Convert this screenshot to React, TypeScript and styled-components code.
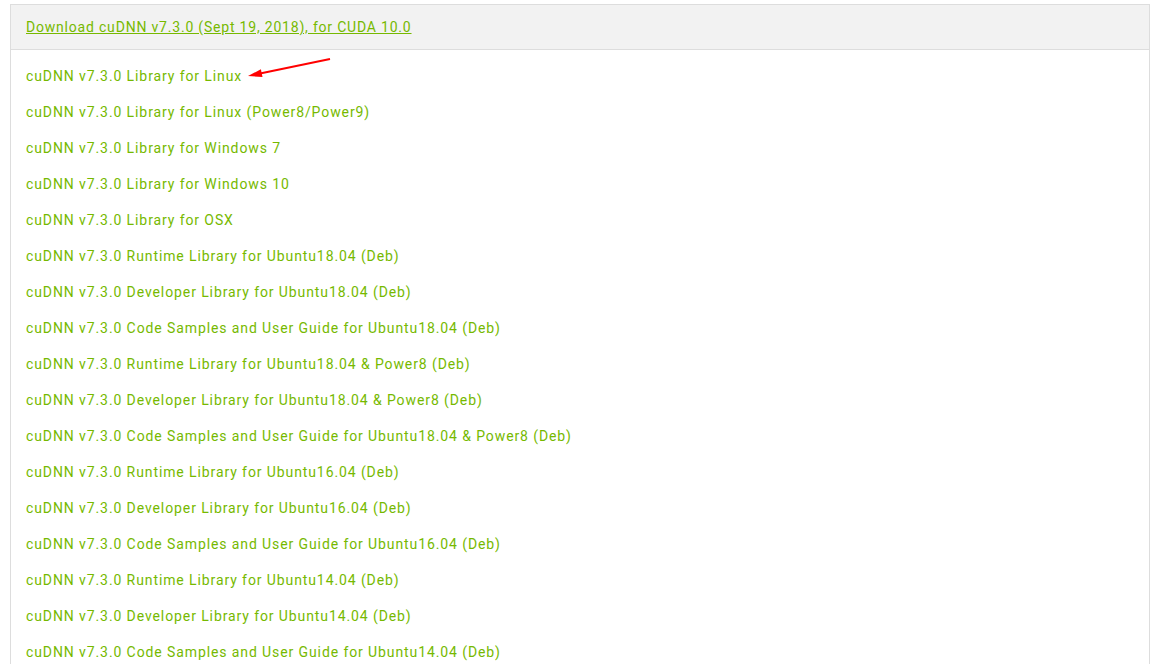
import React from "react";
import styled, { createGlobalStyle } from "styled-components";

const Global = createGlobalStyle`
  body { margin: 0; background: #fff; font-family: Roboto, "Liberation Sans", sans-serif; }
`;

const Page = styled.div`
  padding: 4px 13px 0 10px;
`;

const Panel = styled.div`
  border: 1px solid #dddddd;
  border-bottom: none;
  background: #fff;
`;

const Header = styled.div`
  background: #f2f2f2;
  border-bottom: 1px solid #dddddd;
  height: 44px;
  display: flex;
  align-items: center;
  padding-left: 15px;
`;

const HeaderLink = styled.a`
  color: #76b900;
  font-size: 14px;
  letter-spacing: 0.8px;
  text-decoration: underline;
  cursor: pointer;
`;

const List = styled.ul`
  list-style: none;
  margin: 0;
  padding: 8px 0 0 15px;
`;

const Row = styled.li`
  position: relative;
  height: 36px;
  display: flex;
  align-items: center;
`;

const Item = styled.a`
  color: #76b900;
  font-size: 14px;
  letter-spacing: 0.9px;
  cursor: pointer;
`;

const Arrow = styled.svg`
  position: absolute;
  left: 210px;
  top: -2px;
`;

const items = [
  "cuDNN v7.3.0 Library for Linux",
  "cuDNN v7.3.0 Library for Linux (Power8/Power9)",
  "cuDNN v7.3.0 Library for Windows 7",
  "cuDNN v7.3.0 Library for Windows 10",
  "cuDNN v7.3.0 Library for OSX",
  "cuDNN v7.3.0 Runtime Library for Ubuntu18.04 (Deb)",
  "cuDNN v7.3.0 Developer Library for Ubuntu18.04 (Deb)",
  "cuDNN v7.3.0 Code Samples and User Guide for Ubuntu18.04 (Deb)",
  "cuDNN v7.3.0 Runtime Library for Ubuntu18.04 & Power8 (Deb)",
  "cuDNN v7.3.0 Developer Library for Ubuntu18.04 & Power8 (Deb)",
  "cuDNN v7.3.0 Code Samples and User Guide for Ubuntu18.04 & Power8 (Deb)",
  "cuDNN v7.3.0 Runtime Library for Ubuntu16.04 (Deb)",
  "cuDNN v7.3.0 Developer Library for Ubuntu16.04 (Deb)",
  "cuDNN v7.3.0 Code Samples and User Guide for Ubuntu16.04 (Deb)",
  "cuDNN v7.3.0 Runtime Library for Ubuntu14.04 (Deb)",
  "cuDNN v7.3.0 Developer Library for Ubuntu14.04 (Deb)",
  "cuDNN v7.3.0 Code Samples and User Guide for Ubuntu14.04 (Deb)",
];

export default function App() {
  return (
    <>
      <Global />
      <Page>
        <Panel>
          <Header>
            <HeaderLink>Download cuDNN v7.3.0 (Sept 19, 2018), for CUDA 10.0</HeaderLink>
          </Header>
          <List>
            {items.map((t, i) => (
              <Row key={i}>
                <Item>{t}</Item>
                {i === 0 && (
                  <Arrow width="110" height="30" viewBox="0 0 110 30">
                    <line x1="94" y1="3" x2="24" y2="17.5" stroke="#ff0000" strokeWidth="2" />
                    <polygon points="12,20 26.5,21.1 24.9,13.3" fill="#ff0000" />
                  </Arrow>
                )}
              </Row>
            ))}
          </List>
        </Panel>
      </Page>
    </>
  );
}
